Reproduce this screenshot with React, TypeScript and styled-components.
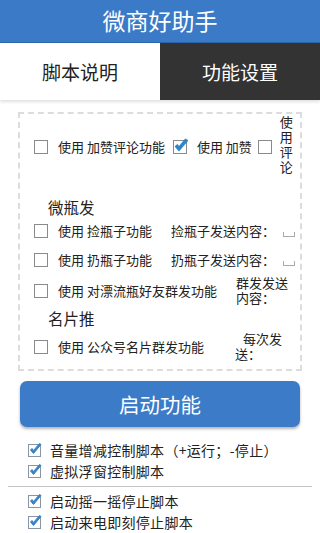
import styled, { createGlobalStyle } from 'styled-components';

const GlobalStyle = createGlobalStyle`
  html, body {
    margin: 0;
    padding: 0;
    background: #fff;
  }
  body {
    font-family: "Noto Sans CJK SC", "Noto Sans", sans-serif;
    color: #222;
  }
`;

const Page = styled.div`
  width: 320px;
  height: 533px;
  overflow: hidden;
  background: #fff;
`;

const Header = styled.div`
  height: 41px;
  background: #3a7ac6;
  border-bottom: 1px solid #2d66aa;
  display: flex;
  align-items: center;
  justify-content: center;
  color: #fff;
  font-size: 23px;
  line-height: 1;
  padding-bottom: 1px;
  box-sizing: content-box;
`;

const Tabs = styled.div`
  display: grid;
  grid-template-columns: 1fr 1fr;
  height: 57px;
  box-shadow: 0 2px 3px rgba(0, 0, 0, 0.12);
`;

const Tab = styled.div<{ $active?: boolean }>`
  display: flex;
  align-items: center;
  justify-content: center;
  font-size: 19px;
  background: ${p => (p.$active ? '#333' : '#fff')};
  color: ${p => (p.$active ? '#fff' : '#222')};
`;

const DashedBox = styled.div`
  margin: 12px 18px 0;
  border: 2px dashed #dcdcdc;
  padding: 2px 0 9px 14px;
  display: flex;
  flex-direction: column;
`;

const Row = styled.div<{ $h: number }>`
  height: ${p => p.$h}px;
  display: flex;
  align-items: center;
  font-size: 13px;
  line-height: 15px;
  white-space: nowrap;
`;

const Label = styled.span<{ $gap?: number }>`
  flex: none;
  margin-left: 9px;
  margin-right: ${p => p.$gap ?? 0}px;
`;

/* the narrow "使用评论" column: one char per line */
const VerticalText = styled.span`
  flex: none;
  writing-mode: vertical-rl;
  text-orientation: upright;
  width: 15px;
  margin-left: 6px;
  font-size: 13px;
  line-height: 15px;
  letter-spacing: 2px;
`;

const SideLabel = styled.span<{ $width?: number; $indent?: number; $left: number }>`
  margin-left: ${p => p.$left}px;
  ${p => (p.$width ? `width: ${p.$width}px; white-space: normal;` : '')}
  text-indent: ${p => p.$indent ?? 0}px;
  line-height: 15px;
`;

const TinyInput = styled.span`
  display: inline-block;
  width: 10px;
  height: 4px;
  margin: 8px 0 0 8px;
  border: 1px solid #aaa;
  border-top: none;
`;

const SectionTitle = styled.div<{ $h: number; $mt?: number }>`
  height: ${p => p.$h}px;
  margin-top: ${p => p.$mt ?? 0}px;
  padding-left: 14px;
  display: flex;
  align-items: center;
  font-size: 15.5px;
`;

const StartButton = styled.button`
  display: block;
  margin: 10px 20px 0;
  width: 280px;
  height: 46px;
  border: none;
  border-radius: 7px;
  background: #3b7bc7;
  color: #fff;
  font-family: inherit;
  font-size: 20.5px;
  box-shadow: 0 2px 3px rgba(0, 0, 0, 0.3);
`;

const OptionList = styled.div<{ $mt: number }>`
  margin-top: ${p => p.$mt}px;
  padding-left: 28px;
`;

const OptionRow = styled.div`
  height: 21px;
  display: flex;
  align-items: center;
  font-size: 14px;
  white-space: nowrap;
`;

const OptionText = styled.span`
  margin-left: 8px;
  letter-spacing: 0.3px;
`;

const Divider = styled.hr`
  margin: 5px 8px 0;
  border: none;
  border-top: 1px solid #c4c4c4;
`;

const Box = ({ checked }: { checked?: boolean }) => (
  <svg width="15" height="15" viewBox="0 0 15 15" style={{ flex: 'none', overflow: 'visible' }}>
    <rect x="0.5" y="1.5" width="13" height="13" fill="#fff" stroke="#8a8a8a" strokeWidth="1" />
    {checked && (
      <path
        d="M2.5 7.5 L6 11.5 L14.5 1.5 L12.5 0.2 L6 8 L4.5 5.8 Z"
        fill="#2f85c9"
        stroke="#2f85c9"
        strokeWidth="1.2"
        strokeLinejoin="round"
      />
    )}
  </svg>
);

const SmallBox = ({ checked }: { checked?: boolean }) => (
  <svg width="14" height="14" viewBox="0 0 14 14" style={{ flex: 'none', overflow: 'visible' }}>
    <rect x="0.5" y="1.5" width="12" height="12" fill="#fff" stroke="#8a96a6" strokeWidth="1" />
    {checked && (
      <path
        d="M2.5 7 L5.5 10.5 L13 1.5 L11.5 0.5 L5.5 7.5 L4 5.5 Z"
        fill="#3a82c4"
        stroke="#3a82c4"
        strokeWidth="1"
        strokeLinejoin="round"
      />
    )}
  </svg>
);

const options = [
  { text: '音量增减控制脚本（+运行；-停止）', checked: true },
  { text: '虚拟浮窗控制脚本', checked: true },
];

const options2 = [
  { text: '启动摇一摇停止脚本', checked: true },
  { text: '启动来电即刻停止脚本', checked: true },
];

export default function App() {
  return (
    <Page>
      <GlobalStyle />
      <Header>微商好助手</Header>
      <Tabs>
        <Tab>脚本说明</Tab>
        <Tab $active>功能设置</Tab>
      </Tabs>

      <DashedBox>
        <Row $h={60}>
          <Box />
          <Label $gap={8}>使用 加赞评论功能</Label>
          <Box checked />
          <Label $gap={6}>使用 加赞</Label>
          <Box />
          <VerticalText>使用评论</VerticalText>
        </Row>

        <SectionTitle $h={22} $mt={20}>微瓶发</SectionTitle>
        <Row $h={24}>
          <Box />
          <Label>使用 捡瓶子功能</Label>
          <SideLabel $left={19}>捡瓶子发送内容：</SideLabel>
          <TinyInput />
        </Row>
        <Row $h={34}>
          <Box />
          <Label>使用 扔瓶子功能</Label>
          <SideLabel $left={19}>扔瓶子发送内容：</SideLabel>
          <TinyInput />
        </Row>
        <Row $h={28}>
          <Box />
          <Label>使用 对漂流瓶好友群发功能</Label>
          <SideLabel $left={19} $width={56}>群发发送内容：</SideLabel>
        </Row>

        <SectionTitle $h={28}>名片推</SectionTitle>
        <Row $h={28}>
          <Box />
          <Label>使用 公众号名片群发功能</Label>
          <SideLabel $left={31} $width={48} $indent={8}>每次发送：</SideLabel>
        </Row>
      </DashedBox>

      <StartButton>启动功能</StartButton>

      <OptionList $mt={12}>
        {options.map(o => (
          <OptionRow key={o.text}>
            <SmallBox checked={o.checked} />
            <OptionText>{o.text}</OptionText>
          </OptionRow>
        ))}
      </OptionList>
      <Divider />
      <OptionList $mt={3}>
        {options2.map(o => (
          <OptionRow key={o.text}>
            <SmallBox checked={o.checked} />
            <OptionText>{o.text}</OptionText>
          </OptionRow>
        ))}
      </OptionList>
    </Page>
  );
}
